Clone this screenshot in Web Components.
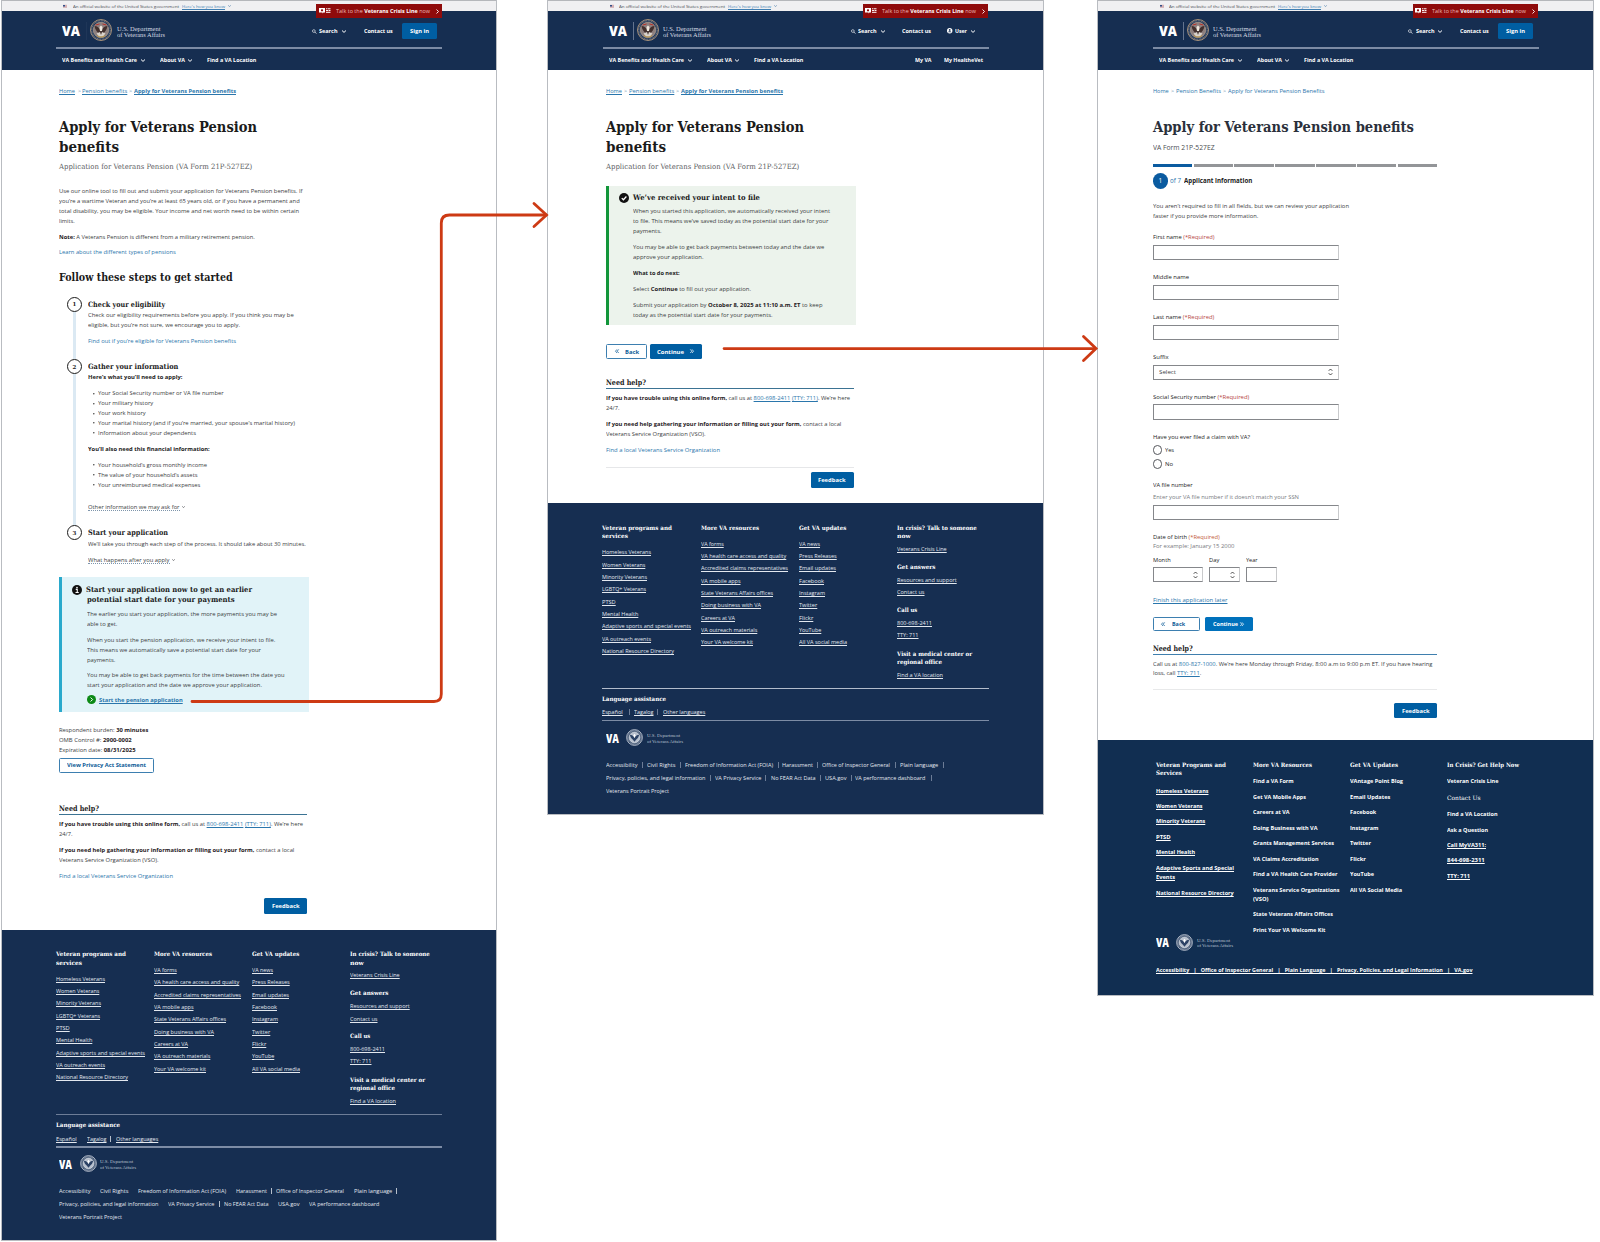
<!DOCTYPE html>
<html lang="en">
<head>
<meta charset="utf-8">
<title>Veterans Pension – application flow</title>
<style>
html,body{margin:0;background:#fff}
body{width:1600px;height:1242px;overflow:hidden;position:relative;font-family:"Open Sans","Noto Sans",sans-serif}
</style>
</head>
<body>
<flow-board></flow-board>
<script>
/* ---------- layout helpers ---------- */
// A row of cells along a line; each cell is [x, width, html, class].
const cells = (left, list) => {
  let p = left;
  return list.map(([x, w, html, cls = '']) => {
    const m = x - p; p = x + w;
    return html.startsWith('<i-') || html.startsWith('<b-')
      ? `<span class="c ${cls}" style="margin-left:${m}px;width:${w}px">${html}</span>`
      : `<fit-text class="${cls}" w="${w}" style="margin-left:${m}px">${html}</fit-text>`;
  }).join('');
};
// Stacks rows [centre, height, html] in normal flow, starting from `top`.
const stack = (top, rows) => {
  let p = top;
  return rows.map(([y, h, html, cls = '']) => {
    const t = y - h / 2, m = t - p; p = t + h;
    return `<div class="r ${cls}" style="margin-top:${m.toFixed(2)}px;height:${h}px">${html}</div>`;
  }).join('');
};
const T = (L, y, x, w, html, cls) => [y, 8, cells(L, [[x, w, html, cls]])];

const BASE = `
*{box-sizing:border-box}
:host{display:flow-root;color:#3b3d42;font-size:5.9px}
.r{display:flex;align-items:center;white-space:nowrap}
.c{display:flex;flex:none;align-items:center}
fit-text{flex:none}
.b{font-weight:700}
.s{font-family:"DejaVu Serif",serif;font-weight:700;color:#1b1b1b}
.a{color:#2a76ac}
span.u{text-decoration:underline;text-decoration-thickness:.6px;text-underline-offset:1px}
.k{color:#222}
.g{color:#777a80}
b{color:#1f2023}
svg{display:block;flex:none}
`;

class Part extends HTMLElement {
  connectedCallback() {
    if (this.shadowRoot) return;
    this.attachShadow({mode: 'open'}).innerHTML = `<style>${BASE}${this.css()}</style>${this.html()}`;
  }
  css() { return ''; }
  html() { return '<slot></slot>'; }
  n(name, d = 0) { return this.hasAttribute(name) ? parseFloat(this.getAttribute(name)) : d; }
}

/* One line of text condensed or widened to a set measure. */
class FitText extends HTMLElement {
  connectedCallback() {
    if (!this.shadowRoot)
      this.attachShadow({mode: 'open'}).innerHTML =
        `<style>:host{display:block;white-space:nowrap;line-height:8px;height:8px}
        span{display:inline-block;transform-origin:0 50%;vertical-align:top}
        :host(.u) span{text-decoration:underline;text-decoration-thickness:.7px;text-underline-offset:.9px;text-decoration-skip-ink:none}</style><span><slot></slot></span>`;
    this.fit();
  }
  fit() {
    const w = parseFloat(this.getAttribute('w')), s = this.shadowRoot.querySelector('span');
    this.style.width = w + 'px';
    s.style.transform = 'none';
    const n = s.getBoundingClientRect().width;
    if (n) s.style.transform = `scaleX(${(w / n).toFixed(4)})`;
  }
}
customElements.define('fit-text', FitText);

/* ---------- icons ---------- */
const icon = (tag, w, h, vb, body) => customElements.define(tag, class extends HTMLElement {
  connectedCallback() {
    if (this.shadowRoot) return;
    this.attachShadow({mode: 'open'}).innerHTML =
      `<style>:host{display:inline-block;flex:none;width:${w}px;height:${h}px}svg{display:block;width:100%;height:100%;overflow:visible}</style>
       <svg viewBox="${vb}" fill="none" stroke="currentColor">${body}</svg>`;
  }
});
icon('i-down', 4, 3, '0 0 8 6', '<path d="M0 1 4 4.800 8 1" stroke-width="2"/>');
icon('i-mini', 3, 2, '0 0 6 4', '<path d="M.5.8 3 3 5.500.8" stroke-width="1.300"/>');
icon('i-right', 3, 5, '0 0 6 10', '<path d="M1 1l4 4-4 4" stroke-width="1.800"/>');
icon('i-search', 4.6, 5, '0 0 10 10', '<circle cx="4" cy="4" r="3" stroke-width="1.300"/><path d="M6.200 6.200 9.500 9.500" stroke-width="1.700"/>');
icon('i-user', 5.4, 5.4, '0 0 12 12', '<circle cx="6" cy="6" r="6" fill="#fff" stroke="none"/><circle cx="6" cy="4.300" r="2" fill="#162e51" stroke="none"/><path d="M2.600 9.500C3 6.800 9 6.800 9.400 9.500" fill="#162e51" stroke="none"/>');
icon('i-chat', 12, 5.6, '0 0 24 11', '<path d="M0 0h12v9H9l-2 2V9H0z" fill="#fff" stroke="none"/><circle cx="6" cy="4.500" r="2.300" fill="#8f0b0b" stroke="none"/><path d="M14 1.500h3M18 1.500h5M14 5h4M19 5h4M14 8.500h9" stroke="#fff" stroke-width="2"/>');
icon('i-flag', 4, 2.6, '0 0 8 5', '<path d="M0 .5h8M0 2.500h8M0 4.500h8" stroke="#b4666c"/><path d="M0 0h4v3H0z" fill="#31508a" stroke="none"/>');
icon('i-left2', 4, 4.4, '0 0 8 9', '<path d="M4 .8.900 4.500 4 8.200M7.500.8 4.400 4.500l3.100 3.700" stroke-width="1.500"/>');
icon('i-right2', 4, 4.4, '0 0 8 9', '<path d="M4 .8l3.100 3.700L4 8.200M.5.8l3.100 3.700L.5 8.200" stroke-width="1.500"/>');
icon('i-updown', 5, 8, '0 0 10 16', '<path d="M1.500 5.500 5 2l3.500 3.500M1.500 10.500 5 14l3.500-3.500" stroke="#2b2b2b" stroke-width="1.700"/>');
icon('i-info', 10, 10, '0 0 20 20', '<circle cx="10" cy="10" r="10" fill="#111" stroke="none"/><circle cx="10" cy="5.200" r="1.700" fill="#fff" stroke="none"/><path d="M7.500 8.800H10.500V14.500M7 15h6.500" stroke="#fff" stroke-width="2.200"/>');
icon('i-check', 10, 10, '0 0 20 20', '<circle cx="10" cy="10" r="10" fill="#111" stroke="none"/><path d="M5.500 10.300 8.800 13.500 14.800 7" stroke="#fff" stroke-width="2.500"/>');
icon('i-go', 9, 9, '0 0 18 18', '<circle cx="9" cy="9" r="9" fill="#0d8a16" stroke="none"/><path d="M7.200 5l4 4-4 4" stroke="#fff" stroke-width="2"/>');
icon('i-seal', 22, 22, '0 0 44 44', `<circle cx="22" cy="22" r="21" fill="#24395a" stroke="#a58f78" stroke-width="2"/>
 <circle cx="22" cy="22" r="18.500" stroke="#9b9a98" stroke-width="2" stroke-dasharray="1.500 1.700"/>
 <circle cx="22" cy="22" r="15.500" fill="#8d7f7e" stroke="#c8b79c" stroke-width="1"/>
 <path d="M9 14c5 0 9 3 11 8l2 3 2-3c2-5 6-8 11-8-1 6-4 11-8 14l-5 5-5-5c-4-3-7-8-8-14z" fill="#42302d" stroke="none"/>
 <path d="M22 13l3 3-1 8h-4l-1-8z" fill="#efe9df" stroke="none"/><path d="M13 29l7-3 2 6 2-6 7 3-5 6h-8z" fill="#d9d3cb" stroke="none"/>
 <path d="M11 12l8-2M25 10l8 2" stroke="#b5322c" stroke-width="2"/><path d="M14 33c5 4 11 4 16 0" stroke="#c49a3a" stroke-width="1.600"/>`);
icon('i-sealmono', 17, 17, '0 0 44 44', `<circle cx="22" cy="22" r="20.500" fill="#3c506e" stroke="#cbd2dc" stroke-width="2"/>
 <circle cx="22" cy="22" r="17.500" stroke="#b4bdcb" stroke-width="2.500" stroke-dasharray="1.600 1.600"/>
 <circle cx="22" cy="22" r="14" fill="#b9c1ce" stroke="#e4e8ee" stroke-width="1.500"/>
 <path d="M10 15c5 0 9 3 12 8 3-5 7-8 12-8-1 6-4 10-8 13l-4 5-4-5c-4-3-7-7-8-13z" fill="#2c4265" stroke="none"/>
 <path d="M22 12l3 4-3 7-3-7z" fill="#fff" stroke="none"/>`);
icon('i-dot', 1.6, 1.6, '0 0 2 2', '<circle cx="1" cy="1" r="1" fill="#444" stroke="none"/>');
icon('i-bar', 1, 6, '0 0 1 6', '<path d="M.5 0v6" stroke="#dfe4eb" stroke-width=".8"/>');
icon('i-thinbar', 1, 6, '0 0 1 6', '<path d="M.5 0v6" stroke="#8391a8" stroke-width=".8"/>');

/* ---------- building blocks ---------- */
customElements.define('b-button', class extends Part {
  css() { return `:host{display:flex;align-items:center;width:100%;height:${this.n('h', 15.5)}px;border-radius:1.5px;font-weight:700;font-size:6px;
    ${this.hasAttribute('outline') ? 'background:#fff;color:#0b5b97;border:1px solid #3d7fb0' : `background:${this.getAttribute('bg') || '#005ea2'};color:#fff`}}`; }
});
customElements.define('b-box', class extends Part {
  css() { return `:host{display:flex;align-items:center;width:100%;height:${this.n('h', 15.3)}px;border:1px solid #85878b;border-right-color:#c9cacc;background:#fff}`; }
});
customElements.define('b-radio', class extends Part {
  css() { return ':host{display:block;width:9.4px;height:9.4px;border:1px solid #55575c;border-radius:50%}'; }
  html() { return ''; }
});
customElements.define('b-rule', class extends Part {
  css() { return `:host{display:block;width:100%;height:${this.n('t', 1)}px;background:${this.getAttribute('color')}}`; }
  html() { return ''; }
});
const rule = (L, y, x, w, color, t = 1) => [y, 2, cells(L, [[x, w, `<b-rule t="${t}" color="${color}"></b-rule>`]])];

/* ---------- page header ---------- */
customElements.define('va-header', class extends Part {
  css() { return `
    :host{display:block;color:#fff}
    .gov{height:11px;background:#f0f0f2;overflow:hidden}
    .gov fit-text{font-size:4.3px;color:#4a4c52}.gov .a{color:#3f7fb3}.gov .c{color:#4677a5}
    .navy{display:flow-root;height:59px;background:#162e51}
    .crisis{position:absolute;top:4px;height:14px;width:125.5px;background:#8f0b0b;display:flex;align-items:center}
    .crisis fit-text{font-size:5.8px;color:#eab9b9}.crisis b{color:#fff}
    .navy fit-text{font-weight:700;color:#fff}
    .navy .logo{font-size:14.5px;font-weight:800}
    .navy .dep{font:6.6px "Liberation Serif",serif;line-height:8px;color:#d5dae2}
    .mark{display:flex;align-items:center}
    .dept{margin-left:4.700px}
    .dept fit-text{line-height:6.5px;height:6.5px}
    i{display:block;width:1px;height:18px;margin:0 1.500px 0 6px;background:#64748e}
  `; }
  html() {
    const L = this.n('left', 2), user = this.hasAttribute('user');
    const right = user
      ? [[304,4.6,'<i-search></i-search>'],[311,18.5,'Search'],[333.5,4,'<i-down></i-down>'],[355,29,'Contact us'],[400,5.4,'<i-user></i-user>'],[407.5,12,'User'],[424,4,'<i-down></i-down>']]
      : [[311,4.6,'<i-search></i-search>'],[318.5,18.5,'Search'],[341,4,'<i-down></i-down>'],[363,28.8,'Contact us'],[401,35,'<b-button h="15.5"><fit-text w="19" style="margin-left:8px;font-size:6px">Sign in</fit-text></b-button>']];
    const nav = [[62,75,'VA Benefits and Health Care'],[141,4,'<i-down></i-down>'],[160,25,'About VA'],[188.3,4,'<i-down></i-down>'],[207.5,49.3,'Find a VA Location']]
      .concat(user ? [[368.3,16.5,'My VA'],[397,39,'My HealtheVet']] : []);
    return `<div class="gov">${stack(0, [[6, 8, cells(L, [[63,4,'<i-flag></i-flag>'],[72.5,106,'An official website of the United States government'],[181.5,43,"Here's how you know",'a u'],[227.5,3,'<i-mini></i-mini>']])]])}</div>
      <div class="crisis" style="left:${316 - L}px">${cells(316, [[318.5,12,'<i-chat></i-chat>'],[335.5,94,'Talk to the <b>Veterans Crisis Line</b> now'],[435.5,3,'<i-right></i-right>']])}</div>
      <div class="navy">${stack(11, [
        [31, 22, `<div class="mark">${cells(L, [[62,18,'VA','logo']])}<i style="${this.hasAttribute('nobar') ? 'opacity:.12' : ''}"></i>
          <span style="margin-left:1.500px"><i-seal></i-seal></span>
          <div class="dept"><fit-text class="dep" w="43.5">U.S. Department</fit-text><fit-text class="dep" w="48">of Veterans Affairs</fit-text></div></div>
          ${cells(164, right)}`],
        rule(L, 48, 56, 386, '#7c8ba4', 1.3),
        [60, 8, cells(L, nav)]
      ])}</div>`;
  }
});

/* ---------- need-help block, heading through feedback ---------- */
customElements.define('need-help', class extends Part {
  html() {
    const L = this.n('left', 2), f1 = this.hasAttribute('plain');
    return stack(0, [
      [8, 10, cells(L, [[59,40,'Need help?','s h']])],
      rule(L, 14, 59, 248, '#3b7393'),
      T(L, 23.1, 59, 244, '<b>If you have trouble using this online form,</b> call us at <span class="a u">800-698-2411</span> <span class="a u">(TTY: 711)</span>. We’re here'),
      T(L, 33, 59, 13.5, '24/7.'),
      T(L, 49.3, 59, 235.3, '<b>If you need help gathering your information or filling out your form,</b> contact a local'),
      T(L, 59, 59, 99.5, 'Veterans Service Organization (VSO).'),
      T(L, 74.7, 59, 114, 'Find a local Veterans Service Organization', 'a'),
      ...(f1 ? [] : [rule(L, 92.5, 59, 248, '#e6e7e9')]),
      [105.2, 15.5, cells(L, [[264,43,'<b-button><fit-text w="27.5" style="margin-left:7.500px">Feedback</fit-text></b-button>']])]
    ]);
  }
  css() { return '.h{font-size:7.5px}'; }
});

/* ---------- footers ---------- */
const FOOT = `
 :host{display:block;background:#162e51}
 fit-text{color:#e3e8ef;font-size:5.6px}
 .s{color:#fff;font-size:6px}
 .cols{display:flex}
 .logo{font-size:11.5px;font-weight:800;color:#fff}
 .dep{font:4.9px "Liberation Serif",serif;line-height:5.5px;height:5.5px;color:#b8c2d0}
 .col{flex:none}
`;
const footLogo = (L, y) => [y, 18, `${cells(L, [[59,13,'VA','logo']])}<span style="margin-left:7.500px"><i-sealmono></i-sealmono></span>
  <div style="margin-left:3.500px"><fit-text class="dep" w="33">U.S. Department</fit-text><fit-text class="dep" w="36">of Veterans Affairs</fit-text></div>`];
const colOf = (w, top, items) => `<div class="col" style="width:${w}px">${stack(top, items.map(([y, tw, t, c]) => [y, 8, cells(0, [[0, tw, t, c || 'u']])]))}</div>`;
const seq = (y0, step, list, c) => list.map(([w, t], i) => [y0 + i * step, w, t, c]);

customElements.define('va-footer', class extends Part {
  css() { return FOOT; }
  html() {
    const L = this.n('left', 2), all = this.hasAttribute('bars'), B = on => all ? '<i-thinbar></i-thinbar>' : on ? '<i-bar></i-bar>' : null;
    const sep = list => list.filter(c => c[2]);
    return `<div class="cols" style="padding-left:${55.7 - L}px;height:184px">
     ${colOf(98.3, 929.5, [[954,70,'Veteran programs and','s'],[962.5,26,'services','s'],
        ...seq(978.5,12.37,[[49,'Homeless Veterans'],[43.3,'Women Veterans'],[45,'Minority Veterans'],[44,'LGBTQ+ Veterans'],[13.7,'PTSD'],[36.3,'Mental Health'],[89,'Adaptive sports and special events'],[49,'VA outreach events'],[72,'National Resource Directory']])])}
     ${colOf(98.3, 929.5, [[954,58,'More VA resources','s'],
        ...seq(970,12.34,[[22.7,'VA forms'],[85.3,'VA health care access and quality'],[87,'Accredited claims representatives'],[39.5,'VA mobile apps'],[72,'State Veterans Affairs offices'],[60,'Doing business with VA'],[34,'Careers at VA'],[56.3,'VA outreach materials'],[52,'Your VA welcome kit']])])}
     ${colOf(98, 929.5, [[954,47.3,'Get VA updates','s'],
        ...seq(970,12.34,[[21,'VA news'],[37.7,'Press Releases'],[37,'Email updates'],[25,'Facebook'],[26,'Instagram'],[18.3,'Twitter'],[14.3,'Flickr'],[22.3,'YouTube'],[48,'All VA social media']])])}
     ${colOf(90, 929.5, [[954,79.7,'In crisis? Talk to someone','s'],[962.5,13.7,'now','s'],[975.3,49.7,'Veterans Crisis Line'],
        [993.3,38.5,'Get answers','s'],[1006.3,59.7,'Resources and support'],[1018.7,27.5,'Contact us'],
        [1036.3,20.3,'Call us','s'],[1049,35,'800-698-2411'],[1061.5,21.5,'TTY: 711'],
        [1080,75,'Visit a medical center or','s'],[1088.3,45,'regional office','s'],[1101,46,'Find a VA location']])}
    </div>
    ${stack(1113.5, [
      rule(L, 1114.2, 55.7, 386.3, all ? '#b3bccb' : '#6d7d97', 1),
      T(L, 1125, 55.7, 64, 'Language assistance', 's'),
      [1138.7, 8, cells(L, sep([[55.7,20.7,'Español','u'],[82,1,B(0)],[87,19.5,'Tagalog','u'],[110.5,1,B(1)],[116,42.3,'Other languages','u']]))],
      rule(L, 1147, 55.7, 386.3, '#7d8ca5', 1.2),
      footLogo(L, 1165),
      [1191, 8, cells(L, sep([[59,31.5,'Accessibility'],[95,1,B(0)],[100,28.5,'Civil Rights'],[133,1,B(0)],[138,88,'Freedom of Information Act (FOIA)'],[231,1,B(0)],[235.5,31,'Harassment'],[270.5,1,B(1)],[275.7,68,'Office of Inspector General'],[348.5,1,B(0)],[353.7,38.3,'Plain language'],[396,1,B(1)]]))],
      [1204.3, 8, cells(L, sep([[59,99.5,'Privacy, policies, and legal information'],[163.5,1,B(0)],[168,46.5,'VA Privacy Service'],[218.5,1,B(1)],[224,44.5,'No FEAR Act Data'],[273,1,B(0)],[278,21.5,'USA.gov'],[304,1,B(0)],[308.5,70.3,'VA performance dashboard'],[384,1,B(0)]]))],
      [1217.3, 8, cells(L, [[59,63,'Veterans Portrait Project']])]
    ])}`;
  }
});

customElements.define('form-footer', class extends Part {
  css() { return FOOT + ':host{background:#112e51}fit-text{color:#fff;font-weight:700}.s{font-weight:700}.n{font-family:"DejaVu Serif",serif;font-weight:400;font-size:6px}.dep{font-weight:400}'; }
  html() {
    const L = this.n('left', 2);
    return `<div class="cols" style="padding-left:${59 - L}px;height:194px">
     ${colOf(97, 740, [[764.5,70,'Veteran Programs and','s'],[773,26,'Services','s'],[790.5,52.5,'Homeless Veterans'],[806,46.5,'Women Veterans'],[821.3,49.3,'Minority Veterans'],[837,14.7,'PTSD'],[852.5,39,'Mental Health'],[867.8,78,'Adaptive Sports and Special'],[877.2,19,'Events'],[892.7,77.7,'National Resource Directory']])}
     ${colOf(97.3, 740, [[764.5,59,'More VA Resources','s'],...seq(781.4,15.48,[[40.7,'Find a VA Form'],[53,'Get VA Mobile Apps'],[36.5,'Careers at VA'],[64.5,'Doing Business with VA'],[81,'Grants Management Services'],[65.5,'VA Claims Accreditation'],[84.5,'Find a VA Health Care Provider'],[86.5,'Veterans Service Organizations']],'p'),[899,15.5,'(VSO)','p'],[914.3,80,'State Veterans Affairs Offices','p'],[930,72.5,'Print Your VA Welcome Kit','p']])}
     ${colOf(97.2, 740, [[764.5,48,'Get VA Updates','s'],...seq(781.4,15.48,[[53,'VAntage Point Blog'],[40.3,'Email Updates'],[26.3,'Facebook'],[28.5,'Instagram'],[21,'Twitter'],[16,'Flickr'],[24,'YouTube'],[52,'All VA Social Media']],'p')])}
     ${colOf(90, 740, [[764.5,72,'In Crisis? Get Help Now','s'],[781.4,51.5,'Veteran Crisis Line','p'],[797.7,33.5,'Contact Us','n'],[814.3,50.5,'Find a VA Location','p'],[830,41,'Ask a Question','p'],[844.8,39,'Call MyVA311:'],[860.3,37.7,'844-698-2311'],[875.7,23,'TTY: 711']])}
    </div>
    ${stack(934, [footLogo(L, 943), T(L, 970, 59, 316.5, 'Accessibility &nbsp; | &nbsp; Office of Inspector General &nbsp; | &nbsp; Plain Language &nbsp; | &nbsp; Privacy, Policies, and Legal Information &nbsp; | &nbsp; VA.gov', 'u')])}`;
  }
});

/* ---------- shared page intro ---------- */
const MAIN = `.h1{font-size:14.2px;color:#1b1b1b}.h2{font-size:10.3px}.h3{font-size:7.4px}
 .sub{font-family:"DejaVu Serif",serif;font-size:7.3px;color:#5b5d62}
 .dot{border-bottom:1px dotted #7e95ab}
 section,ol{margin:0;padding:0;list-style:none}
 .crumb .gt{color:#6a8fab}`;
const intro = L => [
  [90.5, 8, cells(L, [[59,16,'Home','a u'],[77.5,3,'&gt;','gt'],[82,45.3,'Pension benefits','a u'],[129,3,'&gt;','gt'],[134,102,'Apply for Veterans Pension benefits','a u b']]), 'crumb'],
  [127, 16, cells(L, [[59,198,'Apply for Veterans Pension','s h1']])],
  [146.7, 16, cells(L, [[59,60,'benefits','s h1']])],
  [167, 10, cells(L, [[59,193.3,'Application for Veterans Pension (VA Form 21P-527EZ)','sub']])]
];

/* ---------- process list step ---------- */
customElements.define('process-step', class extends Part {
  css() { return `:host{display:flex;height:${this.n('h')}px}
    .rail{flex:none;width:15px;display:flex;flex-direction:column;align-items:center}
    .num{flex:none;width:15.4px;height:15.4px;border:1.4px solid #1b1b1b;border-radius:50%;background:#fff;display:flex;align-items:center;justify-content:center;font:700 5.5px "DejaVu Serif",serif;color:#1b1b1b}
    .line{flex:1;width:3.200px;background:${this.hasAttribute('last') ? 'none' : '#dbe9f3'}}`; }
  html() { return `<div class="rail"><div class="num">${this.getAttribute('n')}</div><div class="line"></div></div><div><slot></slot></div>`; }
});

/* ---------- alert box ---------- */
customElements.define('va-alert', class extends Part {
  css() { return `:host{display:block;height:${this.n('h')}px;width:250px;background:${this.getAttribute('bg')};border-left:3px solid ${this.getAttribute('bar')}}div{display:flow-root}`; }
  html() { return '<div><slot></slot></div>'; }
});

customElements.define('intro-page', class extends Part {
  css() { return MAIN; }
  html() {
    const L = 2, S = 82;
    const step = (n, top, h, rows, last) => `<process-step n="${n}" h="${h}" ${last ? 'last' : ''}>${stack(top, rows)}</process-step>`;
    const t = (y, w, s, c) => T(S - .2, y, 88.3, w, s, c);
    const li = (y, w, s) => [y, 8, cells(S - .2, [[93,1.6,'<i-dot></i-dot>'],[98,w,s]])];
    const A = 62, al = (y, w, s, c) => T(A, y, 86.5, w, s, c);
    return stack(70, [...intro(L),
      T(L,191,59,243.5,'Use our online tool to fill out and submit your application for Veterans Pension benefits. If'),
      T(L,201,59,240.7,'you’re a wartime Veteran and you’re at least 65 years old, or if you have a permanent and'),
      T(L,210.8,59,240,'total disability, you may be eligible. Your income and net worth need to be within certain'),
      T(L,220.7,59,15.7,'limits.'),
      T(L,237,59,195.7,'<b>Note:</b> A Veterans Pension is different from a military retirement pension.'),
      T(L,252.3,59,116.7,'Learn about the different types of pensions','a'),
      [276.7,12,cells(L,[[59,173.7,'Follow these steps to get started','s h2']])]
    ]) + `<ol style="margin:13.900px 0 0 ${66.8 - L}px">` +
      step(1, 296.6, 62.4, [t(305,77.3,'Check your eligibility','s h3'), t(315.5,205.7,'Check our eligibility requirements before you apply. If you think you may be'), t(325.3,152,'eligible, but you’re not sure, we encourage you to apply.'), t(341,148,'Find out if you’re eligible for Veterans Pension benefits','a')]) +
      step(2, 359, 166, [t(367.3,90.3,'Gather your information','s h3'), t(377.5,94.5,'Here’s what you’ll need to apply:','b k'),
        li(393.5,125.7,'Your Social Security number or VA file number'), li(403.5,55.3,'Your military history'), li(413.4,47.7,'Your work history'), li(423.3,197,'Your marital history (and if you’re married, your spouse’s marital history)'), li(433.2,98,'Information about your dependents'),
        t(449,121.7,'You’ll also need this financial information:','b k'),
        li(465.2,109,'Your household’s gross monthly income'), li(475,99.5,'The value of your household’s assets'), li(484.8,102.3,'Your unreimbursed medical expenses'),
        [507.5,8,cells(S - .2,[[88.3,91.5,'Other information we may ask for','dot'],[182.5,3,'<i-mini></i-mini>']])]]) +
      step(3, 525, 42, [t(533.3,80,'Start your application','s h3'), t(544,217.7,'We’ll take you through each step of the process. It should take about 30 minutes.'), [560,8,cells(S - .2,[[88.3,81.5,'What happens after you apply','dot'],[172.5,3,'<i-mini></i-mini>']])]], true) +
    `</ol><section style="margin:10.500px 0 0 ${59 - L}px"><va-alert h="134.3" bg="#e1f3f8" bar="#2aa9cc">` + stack(577.5, [
      [589.7,10,cells(A,[[72.3,10,'<i-info></i-info>'],[86.5,166,'Start your application now to get an earlier','s h3']])],
      al(600,147.7,'potential start date for your payments','s h3'),
      al(614,190,'The earlier you start your application, the more payments you may be'), al(624,30.3,'able to get.'),
      al(640,188.3,'When you start the pension application, we receive your intent to file.'), al(649.7,174,'This means we automatically save a potential start date for your'), al(659.7,28.3,'payments.'),
      al(675.4,197.5,'You may be able to get back payments for the time between the date you'), al(685.3,175,'start your application and the date we approve your application.'),
      [699.8,9,cells(A,[[86.7,9,'<i-go></i-go>'],[99,83.7,'Start the pension application','a u b']])]
    ]) + `</va-alert></section>` + stack(711.8, [
      T(L,729.8,59,89.3,'Respondent burden: <b>30 minutes</b>'), T(L,739.8,59,72.7,'OMB Control #: <b>2900-0002</b>'), T(L,749.8,59,76.5,'Expiration date: <b>08/31/2025</b>'),
      [765.5,15.2,cells(L,[[59,94.7,'<b-button outline h="15.2"><fit-text w="79" style="margin-left:6.700px">View Privacy Act Statement</fit-text></b-button>']])]
    ]) + `<need-help plain left="2" style="margin-top:27.900px"></need-help>`;
  }
});

customElements.define('intent-page', class extends Part {
  css() { return MAIN; }
  html() {
    const L = 1.3, A = 62, al = (y, w, s, c) => T(A, y, 86.5, w, s, c);
    return stack(70, intro(L)) + `<section style="margin:14px 0 0 ${59 - L}px"><va-alert h="139.2" bg="#ecf3ec" bar="#12963a">` + stack(186, [
      [197.8,10,cells(A,[[72.3,10,'<i-check></i-check>'],[86.5,127,'We’ve received your intent to file','s h3']])],
      al(211.5,197,'When you started this application, we automatically received your intent'), al(221,195.3,'to file. This means we’ve saved today as the potential start date for your'), al(231.3,28.5,'payments.'),
      al(247.3,191.3,'You may be able to get back payments between today and the date we'), al(257.2,70.5,'approve your application.'),
      al(273,46.7,'What to do next:','b k'), al(289,118,'Select <b>Continue</b> to fill out your application.'),
      al(305,189.5,'Submit your application by <b>October 8, 2025 at 11:10 a.m. ET</b> to keep'), al(314.8,139.5,'today as the potential start date for your payments.')
    ]) + `</va-alert></section>` + stack(325.2, [
      [351.7,15.4,cells(L,[[59,41,'<b-button outline h="15.4"><i-left2 style="margin-left:8px"></i-left2><fit-text w="14" style="margin-left:6.500px">Back</fit-text></b-button>'],[103,52.3,'<b-button h="15.4"><fit-text w="27" style="margin-left:7.300px">Continue</fit-text><i-right2 style="margin-left:6px"></i-right2></b-button>']])]
    ]) + `<need-help left="1.300" style="margin-top:15.600px"></need-help>`;
  }
});

customElements.define('form-page', class extends Part {
  css() { return MAIN + `.h1{color:#2b303b}.f{font-size:7.300px;color:#4a4c50}em{font-style:normal;color:#b5453f}
    .bars{display:flex;gap:1.300px;width:284.500px}.bars i{flex:1;height:3px;background:#939598}.bars i:first-child{background:#0a5ba0}
    .n{flex:none;width:15.400px;height:15.400px;border-radius:50%;background:#0a5ba0;color:#fff;display:flex;align-items:center;justify-content:center;font-size:6.500px}
    .o{font-size:6.400px}.h{font-size:7.500px}`; }
  html() {
    const L = 1.3, P = 56, t = (y, w, s, c) => T(L, y, P, w, s, c);
    const box = (y, inner = '') => [y, 15.3, cells(L, [[P, 186.3, `<b-box>${inner}</b-box>`]])];
    const req = '<em>(*Required)</em>';
    return stack(70, [
      [90.7,8,cells(L,[[56,15.7,'Home','a'],[74,3,'&gt;','gt'],[79,45,'Pension Benefits','a'],[126.5,3,'&gt;','gt'],[131,96.5,'Apply for Veterans Pension Benefits','a']]),'crumb'],
      [127,16,cells(L,[[56,261,'Apply for Veterans Pension benefits','s h1']])],
      [146.7,9,cells(L,[[56,61.5,'VA Form 21P-527EZ','f']])],
      [165.4,3,`<div class="bars" style="margin-left:${P - L}px"><i></i><i></i><i></i><i></i><i></i><i></i><i></i></div>`],
      [181,15.4,`<span class="n" style="margin-left:${P - L}px">1</span>${cells(71.4,[[73,11,'of 7','a o'],[87,68.3,'Applicant information','b k o']])}`],
      t(206.3,196,'You aren’t required to fill in all fields, but we can review your application'), t(215.9,105.3,'faster if you provide more information.'),
      t(237.5,61.5,'First name '+req,'k'), box(252.9),
      t(277.4,36,'Middle name','k'), box(292.7),
      t(317.3,61.3,'Last name '+req,'k'), box(332.6),
      t(357.1,15.5,'Suffix','k'), box(372.3,'<fit-text w="17" style="margin-left:5px">Select</fit-text><i-updown style="margin-left:152.300px"></i-updown>'),
      t(397.2,96.3,'Social Security number '+req,'k'), box(412.1),
      t(437.5,97,'Have you ever filed a claim with VA?','k'),
      [450,9.4,cells(L,[[55.8,9.4,'<b-radio></b-radio>'],[68,9,'Yes','k']])],
      [464,9.4,cells(L,[[55.8,9.4,'<b-radio></b-radio>'],[68,8,'No','k']])],
      t(485.4,39.7,'VA file number','k'), t(497.6,146,'Enter your VA file number if it doesn’t match your SSN','g'), box(512.5),
      t(537.4,66.7,'Date of birth <em style="color:#c25a3a">(*Required)</em>','k'), t(546.3,81.5,'For example: January 15 2000','g'),
      [560,8,cells(L,[[56,17.7,'Month','k'],[112.3,10.3,'Day','k'],[149.5,11.5,'Year','k']])],
      [575,15.4,cells(L,[[56,50,'<b-box><i-updown style="margin-left:39px"></i-updown></b-box>'],[112,31.3,'<b-box><i-updown style="margin-left:20.500px"></i-updown></b-box>'],[149.5,31.3,'<b-box></b-box>']])],
      t(600,74.5,'Finish this application later','a u'),
      [624.3,14.4,cells(L,[[56,47,'<b-button outline h="14.4"><i-left2 style="margin-left:7.500px"></i-left2><fit-text w="13" style="margin-left:7px">Back</fit-text></b-button>'],[108.2,47.7,'<b-button bg="#0071bc" h="14.4"><fit-text w="25" style="margin-left:8px">Continue</fit-text><i-right2 style="margin-left:2.500px"></i-right2></b-button>']])],
      [648.9,10,cells(L,[[56,39.7,'Need help?','s h']])],
      rule(L,655,56,284.5,'#3f7fae'),
      t(664,279.5,'Call us at <span class="a">800-827-1000</span>. We’re here Monday through Friday, 8:00 a.m to 9:00 p.m ET. If you have hearing'),
      t(673.6,48.3,'loss, call <span class="a u">TTY: 711</span>.'),
      rule(L,690,56,284.5,'#e8e9ea'),
      [710.8,15.4,cells(L,[[297.3,43.2,'<b-button><fit-text w="27.5" style="margin-left:7.700px">Feedback</fit-text></b-button>']])]
    ]);
  }
});

/* ---------- screen frame ---------- */
customElements.define('screen-frame', class extends Part {
  css() { return `:host{display:flex;flex-direction:column;flex:none;position:relative;width:${this.n('w')}px;height:${this.n('h')}px;border:1px solid #b9bcc1;border-top:0;background:#fff}
    :host::after{content:"";position:absolute;left:0;right:0;top:0;height:1px;background:#b5b7bb}
    ::slotted(*){flex:none}.m{flex:none;height:${this.n('m')}px}::slotted([slot=foot]){flex:1}`; }
  html() { return '<slot name="head"></slot><div class="m"><slot></slot></div><slot name="foot"></slot>'; }
});

/* ---------- connectors drawn over the screens ---------- */
customElements.define('flow-arrows', class extends Part {
  css() { return ':host{position:absolute;inset:0;pointer-events:none}'; }
  html() { return `<svg width="1600" height="1242" fill="none" stroke="#cd3a14" stroke-linecap="round" stroke-linejoin="miter">
    <path stroke-width="2.800" d="M192 701.500H434Q441.300 701.500 441.300 694V223Q441.300 215 449.500 215H546"/>
    <path stroke-width="2.800" d="M534 203.500 546.500 215 534 226.500"/>
    <path stroke-width="2.600" d="M724 348.600H1095"/><path stroke-width="2.800" d="M1083.500 336.500 1096 348.600 1083.500 360.500"/></svg>`; }
});

customElements.define('flow-board', class extends Part {
  css() { return ':host{display:block;height:1242px;border-bottom:1px solid #c2c4c8}.row{display:flex;align-items:flex-start;padding-left:1px}screen-frame+screen-frame{margin-left:50px}screen-frame:last-of-type{margin-left:53px}'; }
  html() { return `<div class="row">
    <screen-frame w="496" h="1241" m="859.5"><va-header slot="head" left="2" nobar></va-header><intro-page></intro-page><va-footer slot="foot" left="2"></va-footer></screen-frame>
    <screen-frame w="497" h="814.5" m="433.3"><va-header slot="head" left="1.300" user></va-header><intent-page></intent-page><va-footer slot="foot" left="1.300" bars></va-footer></screen-frame>
    <screen-frame w="497" h="996" m="670"><va-header slot="head" left="1.300"></va-header><form-page></form-page><form-footer slot="foot" left="1.300"></form-footer></screen-frame>
    </div><flow-arrows></flow-arrows>`; }
});
</script>
</body>
</html>
</script>
